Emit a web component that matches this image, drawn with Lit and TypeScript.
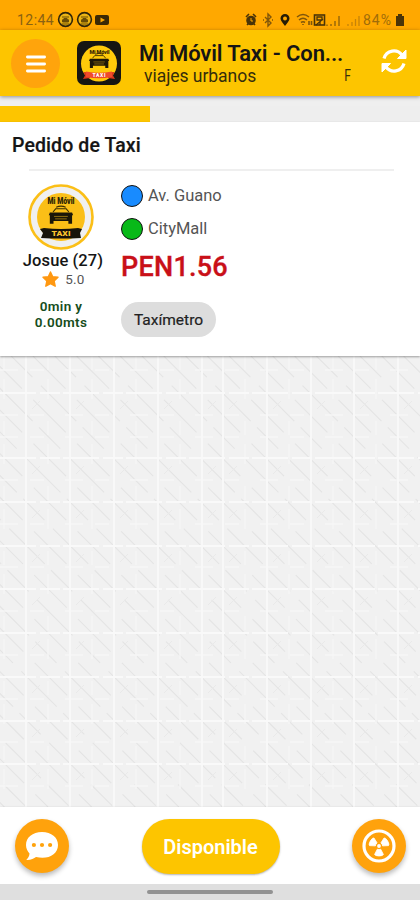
import { LitElement, html, svg, css } from "lit";
import { customElement, property } from "lit/decorators.js";

@customElement("taxi-logo")
class TaxiLogo extends LitElement {
  @property() variant = "round";
  static styles = css`
    :host { display: block; flex: none; }
    svg { display: block; width: 100%; height: 100%; }
    text { font-family: Roboto, sans-serif; font-weight: 900; text-anchor: middle; }
  `;
  render() {
    const car = svg`
      <path d="M28 28.500 Q32.500 26.500 37 28.500" fill="none" stroke="#3a2c00" stroke-width="1"/>
      <path d="M25 33 L27.500 30 H37.500 L40 33" fill="none" stroke="#3a2c00" stroke-width="1"/>
      <path d="M22 33.500H43L44 36H43V44H39.500V41.500H25.500V44H22V36H21Z" fill="#1c1708"/>
      <path d="M26 37.200H39M27 39.500H38" stroke="#a37c12" stroke-width=".8"/>`;
    return this.variant === "square"
      ? html`<svg viewBox="0 0 44 44">
          <rect width="44" height="44" rx="7" fill="#161512"/>
          <circle cx="22" cy="22.500" r="18" fill="#ffca0a"/>
          <text x="22.500" y="12.500" font-size="5.500" fill="#3a2a05" textLength="20">Mi Móvil</text>
          <g transform="translate(-6.500 -11.800) scale(.88)">${car}</g>
          <path d="M6.500 31 L13 31.500 V37 L6 38 L8 34.500Z M37.500 31 L31 31.500 V37 L38 38 L36 34.500Z" fill="#d9361c"/>
          <path d="M9 30.500 Q22 33 35 30.500 V36 Q22 38.500 9 36Z" fill="#ef4a2c"/>
          <text x="22" y="36" font-size="5" fill="#fff" textLength="13">TAXI</text>
        </svg>`
      : html`<svg viewBox="0 0 66 66">
          <circle cx="33" cy="33" r="31.500" fill="#f0f0f0" stroke="#fbbf17" stroke-width="2.600"/>
          <circle cx="33" cy="33" r="24" fill="#fbbf17"/>
          <text x="33" y="19.500" font-size="8.500" fill="#2a2105" textLength="27" lengthAdjust="spacingAndGlyphs">Mi Móvil</text>
          <g transform="translate(-1.500 -7) scale(1.060)">${car}</g>
          <path d="M16 44 Q33 46 50 44 L54 45 L52 49 L53 54 Q33 55 13 54 L15 49 L12 45Z" fill="#17130a"/>
          <text x="33" y="52.300" font-size="6.500" fill="#fbc52f" textLength="19" lengthAdjust="spacingAndGlyphs">TAXI</text>
        </svg>`;
  }
}

const COLUMNS = [26, 70, 114, 158, 202, 223, 267, 311, 354, 398];
const FAINT_COLUMNS = [4, 48, 92, 136, 180, 245, 289, 333, 376];
const ROWS = [37, 102, 146, 190, 233, 277, 321, 365, 408];
const FAINT_ROWS = [14, 59, 81, 124, 168, 211, 255, 299, 343, 386, 430];
const DIAGONALS = Array.from({ length: 42 }, (_, i) => 33 + 21.8 * (i - 23));

@customElement("app-root")
class AppRoot extends LitElement {
  static styles = css`
    :host { display: flex; flex-direction: column; width: 420px; height: 900px; overflow: hidden; background: #efefef; font-family: Roboto, sans-serif; color: #151515; }
    * { box-sizing: border-box; }
    svg { display: block; flex: none; }
    .status { height: 30px; background: #ffa800; display: flex; align-items: center; padding: 9px 14px 0 17px; color: #8a6212; font-size: 14px; flex: none; }
    .clock { width: 40px; letter-spacing: .45px; }
    .spring { flex: 1; }
    .percent { width: 32px; letter-spacing: 1px; color: #a06c0a; }
    .bar { height: 66px; flex: none; background: #fdc500; display: flex; align-items: center; padding: 0 13px 0 11px; box-shadow: 0 1px 4px rgba(0,0,0,.4); z-index: 1; }
    .menu { width: 49px; height: 49px; border-radius: 50%; background: #ffa40c; display: grid; place-items: center; margin-top: 1px; }
    .app-logo { width: 44px; height: 44px; margin: 0 17px 0 17px; }
    .heading { width: 226px; padding-top: 1px; }
    .title { font-size: 22px; line-height: 24px; font-weight: 600; letter-spacing: -.12px; margin: 0 0 0 1px; white-space: nowrap; }
    .sub { display: flex; justify-content: space-between; font-size: 17.500px; line-height: 20px; padding: 0 13px 0 6px; color: #352d0b; letter-spacing: -.04px; }
    .clip { font-size: 16px; transform: scaleX(.75); transform-origin: right; }
    .reload { margin-top: -4px; }
    .progress { margin-top: 10px; height: 16px; flex: none; background: #eee; }
    .progress div { height: 16px; background: #fdc500; }
    .card { background: #fff; height: 234px; flex: none; box-shadow: 0 1px 2px rgba(0,0,0,.35); z-index: 1; }
    .card h2 { margin: 0; padding: 11px 0 0 12px; height: 47px; font-size: 19.500px; line-height: 26px; font-weight: 500; letter-spacing: .1px; -webkit-text-stroke: .2px #151515; }
    .rule { height: 2px; margin: 0 26px 0 29px; background: #efefef; }
    .order { display: flex; padding-top: 13px; }
    .person { width: 121px; padding-left: 1px; display: flex; flex-direction: column; align-items: center; }
    .avatar { width: 66px; height: 66px; }
    .name { font-size: 16.500px; line-height: 20px; font-weight: 500; white-space: nowrap; letter-spacing: .1px; padding: 1px 0 0 4px; }
    .rating { display: flex; align-items: center; gap: 6px; font-size: 13.500px; line-height: 17px; color: #555; padding-left: 5px; letter-spacing: .2px; }
    .distance { font-size: 13.500px; line-height: 16px; font-weight: 600; color: #164d1b; text-align: center; padding-top: 10px; letter-spacing: .3px; }
    .stop { display: flex; align-items: center; height: 22px; gap: 5px; font-size: 16.500px; line-height: 22px; color: #555; margin-bottom: 11px; }
    .order .places { padding-top: 1px; }
    .dot { width: 22px; height: 22px; border: 1.800px solid #111; border-radius: 50%; background: #188bff; }
    .dot.end { background: #08b918; }
    .price { font-size: 27px; line-height: 32px; font-weight: 500; color: #c91018; -webkit-text-stroke: .35px #c91018; letter-spacing: .25px; }
    .chip { width: 95px; height: 35px; border-radius: 18px; background: #ddd; display: grid; place-items: center; font-size: 15.500px; margin-top: 19px; font-weight: 400; -webkit-text-stroke: .2px #222; color: #222; }
    .area { flex: 1; min-height: 0; overflow: hidden; background: #f1f1f1; }
    .bottom { height: 77px; flex: none; background: #fff; display: flex; align-items: center; justify-content: space-between; padding: 1px 14px 0 15px; box-shadow: 0 0 2px rgba(0,0,0,.1); }
    .round { width: 54px; height: 54px; border-radius: 50%; background: #ffa20c; display: grid; place-items: center; box-shadow: 0 3px 5px rgba(0,0,0,.27); }
    .available { width: 138px; height: 55px; border-radius: 28px; background: #fdc500; color: #fff; display: grid; place-items: center; font-size: 20px; font-weight: 600; padding-top: 1px; box-shadow: 0 1px 2px rgba(0,0,0,.3); }
    .gesture { height: 16px; flex: none; background: #dfdfdf; display: flex; justify-content: center; padding-top: 6px; }
    .gesture div { width: 126px; height: 4px; border-radius: 2px; background: #929292; }
  `;

  private badge() {
    return html`<svg width="18.500" height="18" viewBox="0 0 18.500 18"><circle cx="8.500" cy="8.500" r="6.900" fill="#ebb415" stroke="#302509" stroke-width="1.600"/><path d="M5 6H12M5.500 9 7 7.500H10L11.500 9V11H5.500ZM4.500 13H12.500" stroke="#6b4c05" stroke-width="1" fill="#6b4c05"/></svg>`;
  }

  private blade(angle: number) {
    return svg`<path transform="rotate(${angle} 17 17)" d="M15.300 13.800 L12.600 8.600 Q12.600 7.200 17 7 Q21.400 7.200 21.400 8.600 L18.700 13.800 Q17 13 15.300 13.800Z" stroke="#fff" stroke-width=".8" stroke-linejoin="round"/>`;
  }

  render() {
    return html`
      <div class="status">
        <span class="clock">12:44</span>
        ${this.badge()}${this.badge()}
        <svg width="15" height="12"><rect x="1" y="1" width="14" height="10" rx="2" fill="#3b2905"/><path d="M6.500 3.500V8.500L11 6Z" fill="#ffa800"/></svg>
        <span class="spring"></span>
        <svg width="118" height="16" viewBox="0 0 118 16" fill="none" stroke="#4a3408" stroke-width="1.600">
          <circle cx="6" cy="8.500" r="4" fill="#4a3408"/><path d="M1 5 4 2M8 2 11 5M2 13 4 11M10 13 8 11"/><path d="M6 6V9H8" stroke="#ffa800" stroke-width="1"/>
          <path d="M20 5 26 11 23 14V2L26 5 20 11M18 8H19M27 8H28" stroke="#80560a" stroke-width="1.400"/>
          <path d="M40 14C38 11 35.500 9 35.500 6.500a4.500 4.500 0 0 1 9 0C44.500 9 42 11 40 14Z" fill="#271c05" stroke="none"/><circle cx="40" cy="6.500" r="2" fill="#ffa800" stroke="none"/>
          <path d="M52 5Q58 0 64 5M54 8Q58 4.500 62 8M56 10.500Q58 9 60 10.500M58 13V12M64 9V13M66.500 9V13" stroke="#80560a"/>
          <rect x="69.500" y="3" width="10" height="10"/><path d="M72 5H77V8H72ZM71 13 78 7M75 13V10" stroke-width="1.300"/>
          <path d="M82 14V12.500M86 14V12M90 14V9M94 14V4" stroke="#9a680a" stroke-width="1.500"/><path d="M103 14V12M107 14V10M110.500 14V7M114 14V4" stroke="#c68309" stroke-width="1.300"/>
        </svg>
        <span class="percent">84%</span>
        <svg width="11" height="14"><path d="M1 3H3V1H7V3H9V13H1Z" fill="#4a3408"/></svg>
      </div>
      <header class="bar">
        <div class="menu"><svg width="22" height="20" viewBox="0 0 22 20" stroke="#fff" stroke-width="2.800" stroke-linecap="round"><path d="M2.400 3H19.600M2.400 10H19.600M2.400 17H19.600"/></svg></div>
        <taxi-logo class="app-logo" variant="square"></taxi-logo>
        <div class="heading">
          <h1 class="title">Mi Móvil Taxi - Con...</h1>
          <div class="sub"><span>viajes urbanos</span><span class="clip">F</span></div>
        </div>
        <span class="spring"></span>
        <svg class="reload" width="26" height="26" viewBox="0 0 26 26" fill="none" stroke="#fff" stroke-width="3.200"><path d="M3 10.500C5.500 2 16 .5 21 7M23 15.500C20.500 24 10 25.500 5 19"/><path d="M25 2V10.500H16.500ZM1 24V15.500H9.500Z" fill="#fff" stroke="#fff" stroke-width="1" stroke-linejoin="round"/></svg>
      </header>
      <div class="progress"><div style="width:${(150 / 420) * 100}%"></div></div>
      <section class="card">
        <h2>Pedido de Taxi</h2>
        <div class="rule"></div>
        <div class="order">
          <div class="person">
            <taxi-logo class="avatar"></taxi-logo>
            <div class="name">Josue (27)</div>
            <div class="rating"><svg width="17" height="17" viewBox="0 0 17 17"><path d="M8.500 1 10.700 5.700 16 6.300 12.100 9.900 13.200 15.200 8.500 12.600 3.800 15.200 4.900 9.900 1 6.300 6.300 5.700Z" fill="#ff9811" stroke="#ff9811" stroke-width="1.400" stroke-linejoin="round"/></svg><span>5.0</span></div>
            <div class="distance">0min y<br>0.00mts</div>
          </div>
          <div class="places">
            <div class="stop"><span class="dot"></span><span>Av. Guano</span></div>
            <div class="stop"><span class="dot end"></span><span>CityMall</span></div>
            <div class="price">PEN1.56</div>
            <div class="chip">Taxímetro</div>
          </div>
        </div>
      </section>
      <main class="area">
        <svg width="420" height="451" viewBox="0 0 420 451" fill="none">
          ${DIAGONALS.map((d, i) => svg`<path d="M${d} 0L${d + 451} 451" stroke="#e4e4e4" stroke-width="1.100" stroke-dasharray=${i % 2 ? "46 16" : "30 12 50 9"}/>`)}
          ${FAINT_COLUMNS.map((x) => svg`<path d="M${x} 0V451" stroke="#f5f5f5" stroke-width="1.500" stroke-dasharray="14 9 20 22"/>`)}
          ${FAINT_ROWS.map((y) => svg`<path d="M0 ${y}H420" stroke="#f6f6f6" stroke-width="1.500" stroke-dasharray="18 12 14 21"/>`)}
          ${COLUMNS.map((x) => svg`<path d="M${x} 0V451" stroke="#f8f8f8" stroke-width="2"/>`)}
          ${ROWS.map((y) => svg`<path d="M0 ${y}H420" stroke="#f9f9f9" stroke-width="2" stroke-dasharray="36 4 20 3"/>`)}
          ${ROWS.map((y) => COLUMNS.map((x) => svg`<path d="M${x + 6} ${y + 16}l8 -8" stroke="#e9e9e9"/>`))}
        </svg>
      </main>
      <footer class="bottom">
        <div class="round"><svg width="34" height="30" viewBox="0 0 34 30"><path d="M17 1C7.500 1 1 6.500 1 14c0 3.500 1.600 6.300 3.500 8.500C4.500 25 3 27 1.300 29 5.500 29.300 9 27.500 11 26c12 3 22-2.500 22-12C33 6.500 26.500 1 17 1Z" fill="#fff"/><g fill="#ffa20c"><circle cx="8.900" cy="14" r="2.100"/><circle cx="17" cy="14" r="2.100"/><circle cx="25.100" cy="14" r="2.100"/></g></svg></div>
        <div class="available">Disponible</div>
        <div class="round"><svg width="34" height="34" viewBox="0 0 34 34" fill="#fff"><circle cx="17" cy="17" r="15" fill="none" stroke="#fff" stroke-width="3.200"/><circle cx="17" cy="17" r="1.900"/>${this.blade(-60)}${this.blade(60)}${this.blade(180)}</svg></div>
      </footer>
      <div class="gesture"><div></div></div>`;
  }
}
